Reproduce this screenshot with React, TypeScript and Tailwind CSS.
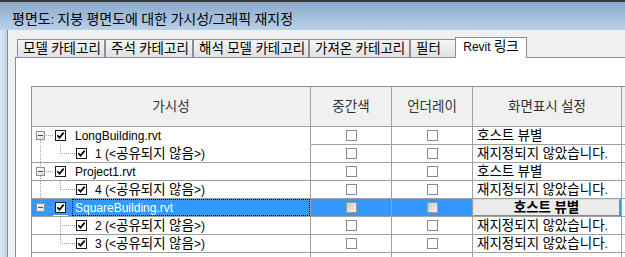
import React from "react";

type Row = {
  kind: "parent" | "child";
  label: string;
  first?: boolean;
  lastRoot?: boolean;
  selected?: boolean;
  rootHasNext?: boolean;
  lastChild?: boolean;
};

const rows: Row[] = [
  { kind: "parent", label: "LongBuilding.rvt", first: true },
  { kind: "child", label: "1 (<공유되지 않음>)", rootHasNext: true, lastChild: true },
  { kind: "parent", label: "Project1.rvt" },
  { kind: "child", label: "4 (<공유되지 않음>)", rootHasNext: true, lastChild: true },
  { kind: "parent", label: "SquareBuilding.rvt", lastRoot: true, selected: true },
  { kind: "child", label: "2 (<공유되지 않음>)", rootHasNext: false, lastChild: false },
  { kind: "child", label: "3 (<공유되지 않음>)", rootHasNext: false, lastChild: true },
];

const DOT = "#a0a0a0";

function K({ t, big }: { t: string; big?: boolean }) {
  const parts = t.split(/([\uAC00-\uD7A3]+)/);
  return (
    <>
      {parts.map((p, i) =>
        /[\uAC00-\uD7A3]/.test(p) ? (
          <span key={i} className={big ? "text-[14px]" : "text-[13.5px]"}>
            {p}
          </span>
        ) : (
          <React.Fragment key={i}>{p}</React.Fragment>
        )
      )}
    </>
  );
}

function TreeCheck() {
  return (
    <svg width="11" height="11" viewBox="0 0 11 11" className="shrink-0 block">
      <rect x="0.5" y="0.5" width="10" height="10" fill="#fff" stroke="#1c1c1c" />
      <path d="M2.3 5.2 L4.5 7.6 L8.7 2.6" fill="none" stroke="#000" strokeWidth="1.7" />
    </svg>
  );
}

function ParentGutter({ first, lastRoot }: { first?: boolean; lastRoot?: boolean }) {
  return (
    <svg width="22" height="17" viewBox="0 0 22 17" className="shrink-0 block">
      {!first && <line x1="8.5" y1="0" x2="8.5" y2="4" stroke={DOT} strokeDasharray="1 1" />}
      {!lastRoot && <line x1="8.5" y1="13" x2="8.5" y2="17" stroke={DOT} strokeDasharray="1 1" />}
      <defs>
        <linearGradient id="bx" x1="0" y1="0" x2="1" y2="1">
          <stop offset="0" stopColor="#ffffff" />
          <stop offset="1" stopColor="#d9d9d9" />
        </linearGradient>
      </defs>
      <rect x="4.5" y="4.5" width="8" height="8" fill="url(#bx)" stroke="#8f8f8f" />
      <line x1="6" y1="8.5" x2="11" y2="8.5" stroke="#3b4f8c" />
      <line x1="14" y1="8.5" x2="22" y2="8.5" stroke={DOT} strokeDasharray="1 1" />
    </svg>
  );
}

function ChildGutter({ rootHasNext, lastChild }: { rootHasNext?: boolean; lastChild?: boolean }) {
  return (
    <svg width="43" height="17" viewBox="0 0 43 17" className="shrink-0 block">
      {rootHasNext && <line x1="8.5" y1="0" x2="8.5" y2="17" stroke={DOT} strokeDasharray="1 1" />}
      <line x1="28.5" y1="0" x2="28.5" y2={lastChild ? 9 : 17} stroke={DOT} strokeDasharray="1 1" />
      <line x1="30" y1="8.5" x2="43" y2="8.5" stroke={DOT} strokeDasharray="1 1" />
    </svg>
  );
}

function GridCheck({ selected }: { selected?: boolean }) {
  return (
    <div
      className={
        selected
          ? "w-[11px] h-[11px] border border-[#9a9a9a] bg-gradient-to-br from-[#c9c9c9] to-[#f4f4f4]"
          : "w-[11px] h-[11px] border border-[#8a8a8a] bg-white"
      }
    />
  );
}

const cell = "border-r border-b border-[#a0a0a0] h-[18px]";
const head = "border-r border-b border-[#a0a0a0] h-[40px] bg-[#f0f0f0] flex items-center justify-center text-[#333]";

export default function App() {
  return (
    <div className="w-[625px] h-[257px] overflow-hidden flex flex-col bg-[#c4d8ee] font-['Liberation_Sans','Noto_Sans_CJK_KR',sans-serif] text-[12px] text-black leading-none">
      <div className="h-[30px] shrink-0 border-t-2 border-[#3a3a3a] bg-gradient-to-b from-[#8aa9ca] to-[#b9d1e9] pl-[12px] pt-[5px] flex items-center">
        <span>
          <K t="평면도: 지붕 평면도에 대한 가시성/그래픽 재지정" big />
        </span>
      </div>
      <div className="flex flex-1 min-h-0">
        <div className="w-[7px] shrink-0 bg-gradient-to-r from-[#dde8f4] to-[#bed3ea]" />
        <div className="flex-1 min-w-0 border-l border-[#7d8a99] bg-[#f0f0f0] pt-[6px] pl-[7px] flex flex-col">
          <div className="flex items-end h-[21px] ml-[2px] shrink-0">
            {[
              ["모델 카테고리", "w-[88px]"],
              ["주석 카테고리", "w-[88px]"],
              ["해석 모델 카테고리", "w-[116px]"],
              ["가져온 카테고리", "w-[101px]"],
              ["필터", "w-[46px]"],
            ].map(([t, w]) => (
              <div
                key={t}
                className={`${w} h-[18px] shrink-0 border border-b-0 border-[#8c8e94] bg-gradient-to-b from-[#f5f5f5] to-[#e1e1e1] pl-[5px] flex items-center whitespace-nowrap overflow-hidden`}
              >
                <span>
                  <K t={t} />
                </span>
              </div>
            ))}
            <div className="w-[72px] h-[21px] -ml-[1px] -mb-[1px] shrink-0 relative z-10 border border-b-0 border-[#8c8e94] bg-white flex items-center justify-center whitespace-nowrap pb-[2px]">
              <span>
                <K t="Revit 링크" />
              </span>
            </div>
          </div>
          <div className="flex-1 min-h-0 border-l border-t border-[#898c95] bg-white pl-[15px] pt-[28px]">
            <div className="w-[640px] border-l border-t border-[#8f8f8f] grid grid-cols-[279px_81px_81px_149px_1fr]">
              <div className={head}>
                <K t="가시성" />
              </div>
              <div className={head}>
                <K t="중간색" />
              </div>
              <div className={head}>
                <K t="언더레이" />
              </div>
              <div className={head}>
                <span>
                  <K t="화면표시 설정" />
                </span>
              </div>
              <div className="border-b border-[#a0a0a0] h-[40px] bg-[#f0f0f0]" />
              {rows.map((r, i) => {
                const sel = !!r.selected;
                const bg = sel ? "bg-[#3399ff]" : "bg-white";
                const firstCellBorder = r.first ? "border-b-white" : "";
                return (
                  <React.Fragment key={i}>
                    <div className={`${cell} ${firstCellBorder} ${bg} flex items-center whitespace-nowrap`}>
                      {r.kind === "parent" ? (
                        <>
                          <ParentGutter first={r.first} lastRoot={r.lastRoot} />
                          <div className="relative ml-[1px]">
                            <TreeCheck />
                            {sel && <div className="absolute left-[-2px] right-[-2px] top-[13px] h-[1px] bg-white" />}
                          </div>
                          <div
                            className={`ml-[6px] flex-1 h-[17px] flex items-center pl-[2px] border ${
                              sel ? "border-dotted border-black text-white" : "border-transparent"
                            }`}
                          >
                            <span>{r.label}</span>
                          </div>
                        </>
                      ) : (
                        <>
                          <ChildGutter rootHasNext={r.rootHasNext} lastChild={r.lastChild} />
                          <div className="ml-[1px]">
                            <TreeCheck />
                          </div>
                          <span className="ml-[8px]">
                            <K t={r.label} />
                          </span>
                        </>
                      )}
                    </div>
                    <div className={`${cell} ${bg} flex items-center justify-center`}>
                      <GridCheck selected={sel} />
                    </div>
                    <div className={`${cell} ${bg} flex items-center justify-center`}>
                      <GridCheck selected={sel} />
                    </div>
                    <div className={`${cell} ${bg} flex items-center whitespace-nowrap`}>
                      {sel ? (
                        <div className="w-[147px] h-[17px] border border-[#8a8a8a] border-t-[#dadada] border-l-[#dadada] bg-[#ececec] flex items-center justify-center font-bold">
                          <span>
                            <K t="호스트 뷰별" />
                          </span>
                        </div>
                      ) : (
                        <span className="pl-[4px]">
                          <K t={r.kind === "parent" ? "호스트 뷰별" : "재지정되지 않았습니다."} />
                        </span>
                      )}
                    </div>
                    <div className="border-b border-[#a0a0a0] h-[18px] bg-white" />
                  </React.Fragment>
                );
              })}
              <div className={`${cell} bg-white`} />
              <div className={`${cell} bg-white`} />
              <div className={`${cell} bg-white`} />
              <div className={`${cell} bg-white`} />
              <div className="border-b border-[#a0a0a0] h-[18px] bg-white" />
            </div>
          </div>
        </div>
      </div>
    </div>
  );
}
